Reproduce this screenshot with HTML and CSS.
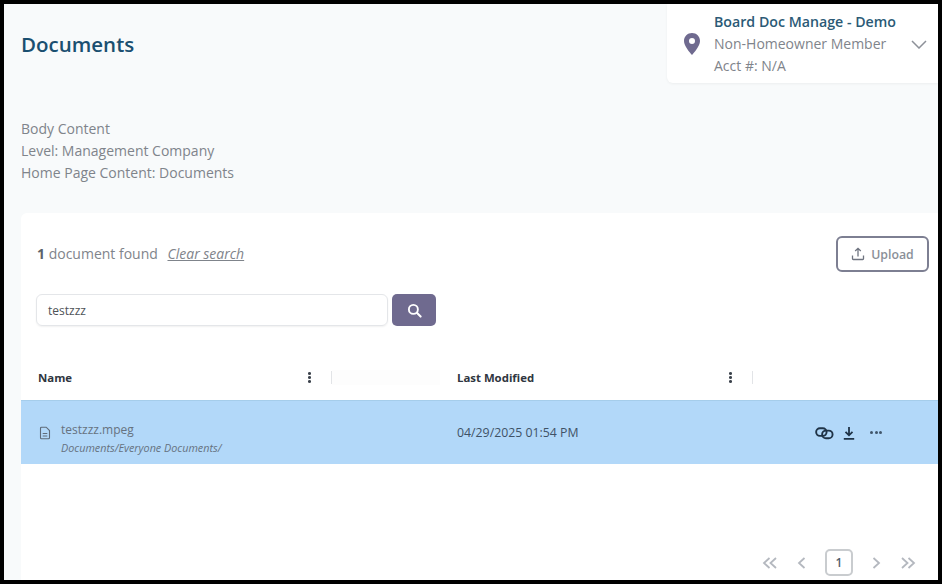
FILE: index.html
```html
<!DOCTYPE html>
<html lang="en">
<head>
<meta charset="utf-8">
<title>Documents</title>
<link rel="stylesheet" href="styles.css">
</head>
<body>
<div class="frame">
  <header class="top">
    <h1 class="title">Documents</h1>
    <div class="account">
      <svg class="pin" viewBox="0 0 18 24" width="18" height="24"><path fill="#6f6a8f" fill-rule="evenodd" d="M9 1C4.500 1 1 4.500 1 9c0 5.200 6 11.600 8 14 2-2.400 8-8.800 8-14 0-4.500-3.500-8-8-8zm0 5a3 3 0 1 1 0 6 3 3 0 0 1 0-6z"/></svg>
      <div class="account-text">
        <div class="account-name">Board Doc Manage - Demo</div>
        <div>Non-Homeowner Member</div>
        <div>Acct #: N/A</div>
      </div>
      <svg class="chev" viewBox="0 0 16 9" width="16" height="9"><path d="M1 1l7 7 7-7" fill="none" stroke="#8d9199" stroke-width="1.500"/></svg>
    </div>
  </header>
  <section class="intro">
    <div>Body Content</div>
    <div>Level: Management Company</div>
    <div>Home Page Content: Documents</div>
  </section>
  <main class="card">
    <div class="toolbar">
      <div class="found"><b>1</b> document found <a class="clear">Clear search</a></div>
      <button class="upload">
        <svg viewBox="0 0 14 14" width="14" height="14"><path d="M7 9.500V1.500M4.200 4L7 1.300 9.800 4M1.500 8.500v3.200c0 .5.300.8.800.8h9.400c.5 0 .8-.3.8-.8V8.500" fill="none" stroke="#6f7480" stroke-width="1.300"/></svg>
        Upload
      </button>
    </div>
    <div class="search">
      <div class="search-input">testzzz</div>
      <button class="search-btn"><svg viewBox="0 0 16 16" width="15" height="15"><circle cx="6.800" cy="6.800" r="4.800" fill="none" stroke="#fff" stroke-width="2"/><path d="M10.500 10.500L14.500 14.500" stroke="#fff" stroke-width="2.200" stroke-linecap="round"/></svg></button>
    </div>
    <div class="thead">
      <div class="th th-name">Name<span class="kebab"><i></i><i></i><i></i></span></div>
      <div class="sep"></div>
      <div class="th-gap"></div>
      <div class="th th-mod">Last Modified<span class="kebab"><i></i><i></i><i></i></span></div>
      <div class="sep"></div>
    </div>
    <div class="row">
      <div class="cell-name">
        <svg viewBox="0 0 12 14" width="12" height="14"><path d="M1.500 2.200c0-.6.400-1 1-1h4.700l3.300 3.300v7.300c0 .6-.4 1-1 1h-7c-.6 0-1-.4-1-1zM3.700 7.500h4.600M3.700 10h4.600" fill="none" stroke="#5f6b7a" stroke-width="1.100"/></svg>
        <div class="file-text">
          <div class="file">testzzz.mpeg</div>
          <div class="path">Documents/Everyone Documents/</div>
        </div>
      </div>
      <div class="cell-date">04/29/2025 01:54 PM</div>
      <div class="actions">
        <svg viewBox="0 0 20 14" width="19" height="14"><g fill="none" stroke="#1f3347" stroke-width="2"><rect x="1.200" y="2" width="11" height="8" rx="4"/><rect x="7.500" y="4.500" width="11" height="8" rx="4"/></g></svg>
        <svg viewBox="0 0 12 14" width="12" height="14"><path d="M6 1v8M2.500 5.800L6 9.300l3.500-3.500M.8 12.800h10.400" fill="none" stroke="#1f3347" stroke-width="1.800"/></svg>
        <span class="dots"><i></i><i></i><i></i></span>
      </div>
    </div>
    <nav class="pager">
      <svg viewBox="0 0 16 12" width="16" height="12"><path d="M7.500 1L2 6l5.500 5M14 1L8.500 6l5.500 5" fill="none" stroke="#b4b8bf" stroke-width="1.800"/></svg>
      <svg viewBox="0 0 9 12" width="9" height="12"><path d="M7.500 1L2 6l5.500 5" fill="none" stroke="#b4b8bf" stroke-width="1.800"/></svg>
      <span class="page">1</span>
      <svg viewBox="0 0 9 12" width="9" height="12"><path d="M1.500 1L7 6l-5.500 5" fill="none" stroke="#b4b8bf" stroke-width="1.800"/></svg>
      <svg viewBox="0 0 16 12" width="16" height="12"><path d="M2 1l5.500 5L2 11M8.500 1L14 6l-5.500 5" fill="none" stroke="#b4b8bf" stroke-width="1.800"/></svg>
    </nav>
  </main>
</div>
</body>
</html>
```
FILE: styles.css
```css
* { box-sizing: border-box; }
html, body { margin: 0; padding: 0; background: #000; }
body { width: 942px; height: 584px; overflow: hidden; font-family: "Open Sans", "Noto Sans", sans-serif; }
.frame {
  width: 934px; height: 576px;
  margin: 4px 0 0 4px;
  background: #f8fafb;
  overflow: hidden;
  display: flex; flex-direction: column;
  color: #7f848b;
  font-size: 14px;
}
.top { display: flex; justify-content: space-between; align-items: flex-start; padding-left: 17px; height: 114px; flex: none; }
.title { margin: 25px 0 0; font-size: 20.500px; line-height: 30px; font-weight: 600; color: #1a4f70; }
.account {
  width: 271px; height: 79px;
  background: #fff;
  border-radius: 0 0 0 6px;
  box-shadow: 0 1px 3px rgba(0,0,0,.05);
  display: flex; align-items: center;
  padding-left: 16px;
}
.pin { flex: none; margin-top: 1px; }
.account-text { margin-left: 13px; line-height: 22px; width: 197px; margin-top: 1px; }
.account-name { color: #2b5a76; font-weight: 600; font-size: 14.200px; }
.chev { flex: none; margin-top: 2px; }
.intro { padding-left: 17px; line-height: 22px; height: 95px; flex: none; }
.card { background: #fff; flex: 1; margin-left: 17px; display: flex; flex-direction: column; min-height: 0; border-radius: 6px 0 0 0; }
.toolbar { display: flex; justify-content: space-between; align-items: center; height: 36px; margin-top: 23px; padding: 0 9px 0 16px; flex: none; }
.found { margin-top: -2px; }
.found b { color: #5d6268; font-weight: 700; }
.clear { font-style: italic; text-decoration: underline; margin-left: 6px; }
.upload {
  width: 93px; height: 36px;
  background: #fff;
  border: 2px solid #7d7f92; border-radius: 6px;
  font: 600 12.300px "Open Sans", sans-serif; color: #8a8f98;
  display: flex; align-items: center; justify-content: center; gap: 6px; padding: 0;
}
.search { display: flex; gap: 4px; padding-left: 15px; margin-top: 22px; flex: none; }
.search-input {
  width: 352px; height: 32px;
  border: 1px solid #e4e6e9; border-radius: 6px;
  box-shadow: 0 1px 2px rgba(0,0,0,.06);
  padding-left: 11px;
  font-size: 12px; line-height: 31px; color: #4e5358;
}
.search-btn { width: 44px; height: 32px; background: #6f6a8f; border: 0; border-radius: 5px; display: flex; align-items: center; justify-content: center; padding: 0; }
.thead { display: flex; align-items: center; height: 38px; padding-bottom: 7px; margin-top: 36px; flex: none; color: #2f3640; }
.th { font-size: 11.400px; font-weight: 700; display: flex; justify-content: space-between; align-items: center; flex: none; }
.th-name { width: 273px; margin-left: 17px; }
.th-mod { width: 275px; }
.th-gap { width: 125px; height: 15px; flex: none; background: linear-gradient(90deg, #fdfdfd 0, #fdfdfd 108px, #fff 108px); }
.sep { width: 1px; height: 13px; background: #e2e4e7; margin-left: 20px; flex: none; }
.kebab { display: flex; flex-direction: column; gap: 1.500px; width: 3px; }
.kebab i { display: block; width: 3px; height: 2.500px; border-radius: 50%; background: #3b424b; }
.row { height: 64px; background: #b2d8f9; border-top: 1px solid #a5cdeb; display: flex; align-items: center; flex: none; color: #4f5d6c; }
.cell-name { display: flex; align-items: center; gap: 10px; width: 436px; padding-left: 18px; flex: none; }
.file-text { margin-top: 10px; }
.file { font-size: 12px; line-height: 18px; color: #66727f; }
.path { font-size: 10.800px; line-height: 14px; font-style: italic; color: #66727f; margin-top: 2px; }
.cell-date { font-size: 12.300px; width: 358px; flex: none; color: #3f5266; }
.actions { display: flex; align-items: center; gap: 9px; }
.dots { display: flex; gap: 1.500px; margin-left: 6px; }
.dots i { width: 3px; height: 3px; border-radius: 50%; background: #40566b; display: block; }
.pager { margin-top: auto; margin-bottom: 4px; display: flex; align-items: center; justify-content: flex-end; gap: 19px; padding-right: 22px; flex: none; }
.page { width: 28px; height: 27px; border: 2px solid #c9cccf; border-radius: 5px; font-size: 12px; font-weight: 600; line-height: 23px; text-align: center; color: #4f5d6c; }
```
